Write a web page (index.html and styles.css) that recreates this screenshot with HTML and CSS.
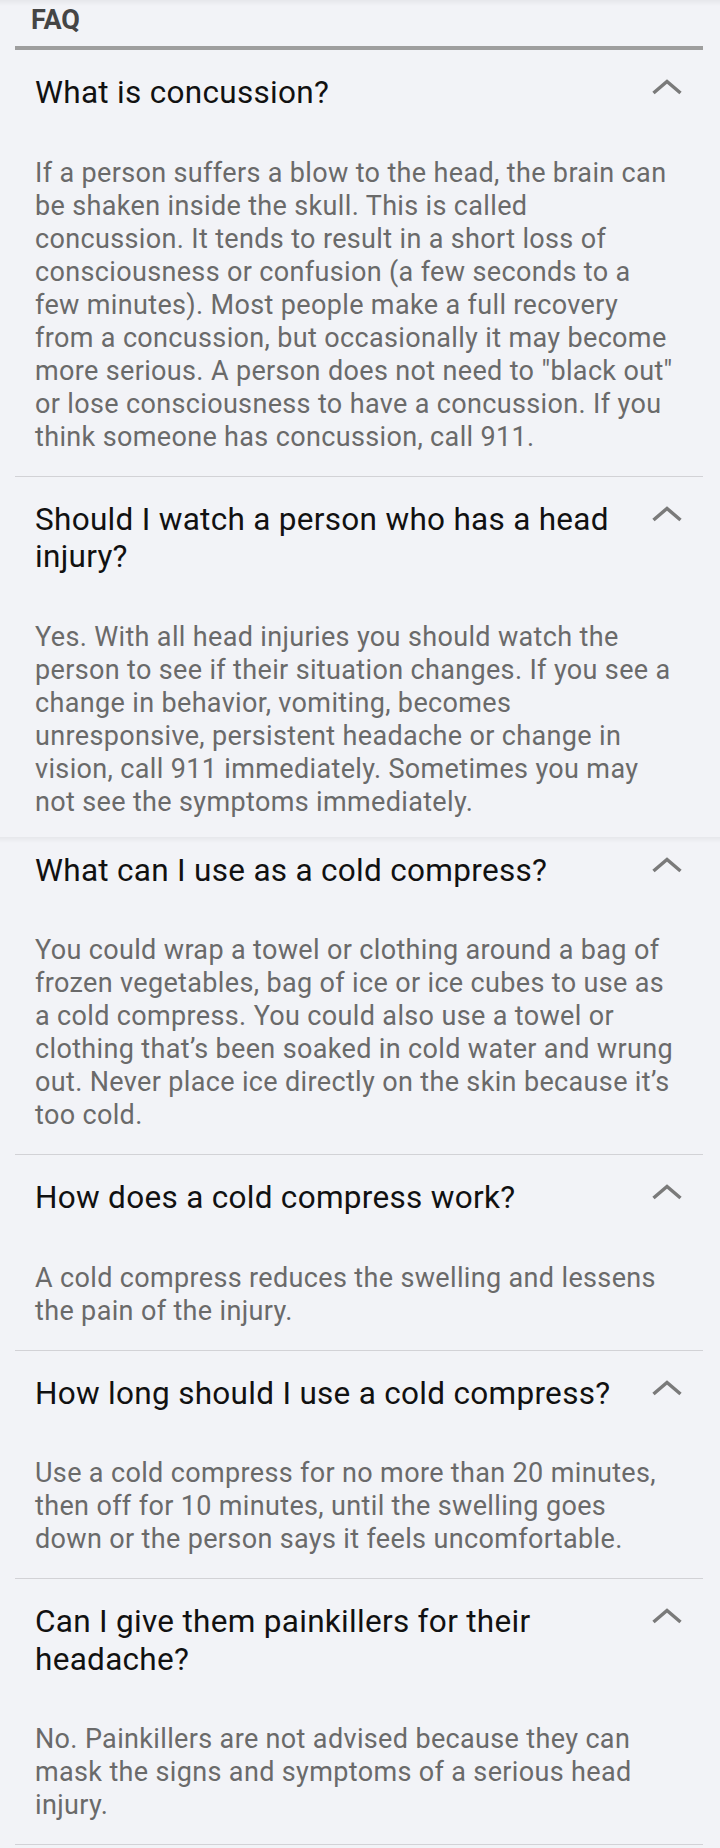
FILE: index.html
```html
<!DOCTYPE html>
<html lang="en">
<head>
<meta charset="utf-8">
<title>FAQ</title>
<link rel="stylesheet" href="styles.css">
</head>
<body>
<section class="group">
  <header class="faq-head"><h1 class="faq-title">FAQ</h1></header>
  <article class="item">
    <div class="q-row">
      <h2 class="q">What is concussion?</h2>
      <svg class="chev" viewBox="0 0 30 16" aria-hidden="true"><polyline points="1.5,14 15,2.5 28.5,14"/></svg>
    </div>
    <p class="a">If a person suffers a blow to the head, the brain can be shaken inside the skull. This is called concussion. It tends to result in a short loss of consciousness or confusion (a few seconds to a few minutes). Most people make a full recovery from a concussion, but occasionally it may become more serious. A person does not need to "black out" or lose consciousness to have a concussion. If you think someone has concussion, call 911.</p>
  </article>
  <article class="item">
    <div class="q-row">
      <h2 class="q">Should I watch a person who has a head injury?</h2>
      <svg class="chev" viewBox="0 0 30 16" aria-hidden="true"><polyline points="1.5,14 15,2.5 28.5,14"/></svg>
    </div>
    <p class="a">Yes. With all head injuries you should watch the person to see if their situation changes. If you see a change in behavior, vomiting, becomes unresponsive, persistent headache or change in vision, call 911 immediately. Sometimes you may not see the symptoms immediately.</p>
  </article>
</section>
<section class="group">
  <article class="item">
    <div class="q-row">
      <h2 class="q">What can I use as a cold compress?</h2>
      <svg class="chev" viewBox="0 0 30 16" aria-hidden="true"><polyline points="1.5,14 15,2.5 28.5,14"/></svg>
    </div>
    <p class="a">You could wrap a towel or clothing around a bag of frozen vegetables, bag of ice or ice cubes to use as a cold compress. You could also use a towel or clothing that’s been soaked in cold water and wrung out. Never place ice directly on the skin because it’s too cold.</p>
  </article>
  <article class="item">
    <div class="q-row">
      <h2 class="q">How does a cold compress work?</h2>
      <svg class="chev" viewBox="0 0 30 16" aria-hidden="true"><polyline points="1.5,14 15,2.5 28.5,14"/></svg>
    </div>
    <p class="a">A cold compress reduces the swelling and lessens the pain of the injury.</p>
  </article>
  <article class="item">
    <div class="q-row">
      <h2 class="q">How long should I use a cold compress?</h2>
      <svg class="chev" viewBox="0 0 30 16" aria-hidden="true"><polyline points="1.5,14 15,2.5 28.5,14"/></svg>
    </div>
    <p class="a">Use a cold compress for no more than 20 minutes, then off for 10 minutes, until the swelling goes down or the person says it feels uncomfortable.</p>
  </article>
  <article class="item">
    <div class="q-row">
      <h2 class="q">Can I give them painkillers for their headache?</h2>
      <svg class="chev" viewBox="0 0 30 16" aria-hidden="true"><polyline points="1.5,14 15,2.5 28.5,14"/></svg>
    </div>
    <p class="a">No. Painkillers are not advised because they can mask the signs and symptoms of a serious head injury.</p>
  </article>
</section>
</body>
</html>
```

FILE: styles.css
```css
html, body {
  margin: 0;
  padding: 0;
  width: 720px;
  overflow-x: hidden;
}

body {
  background: #f2f3f7;
  font-family: Roboto, "Noto Sans", sans-serif;
}

.group {
  background: linear-gradient(to bottom, #e6e7eb 0, #f2f3f7 6px);
  padding: 0 17px 0 15px;
}

.faq-head {
  padding: 4px 0 9px 16px;
  border-bottom: 4px solid #9e9e9e;
}

.faq-title {
  margin: 0;
  font-size: 27px;
  line-height: 33px;
  font-weight: 700;
  color: #454545;
}

.item {
  padding: 24px 0 22px 20px;
  border-bottom: 1px solid #d2d2d6;
}

.group:first-child .item:last-child {
  border-bottom: none;
  padding-bottom: 18px;
}

.group + .group .item:first-child {
  padding-top: 15px;
}

.q-row {
  display: flex;
  align-items: flex-start;
  gap: 16px;
  padding-right: 21px;
}

.q {
  flex: 1;
  margin: 0;
  font-size: 31.5px;
  line-height: 37.5px;
  font-weight: 400;
  letter-spacing: 0.3px;
  color: #111111;
}

.chev {
  flex: none;
  width: 30px;
  height: 16px;
  margin-top: 5px;
}

.chev polyline {
  fill: none;
  stroke: #7a7a7a;
  stroke-width: 3.5;
  stroke-linejoin: miter;
}

.a {
  margin: 45px 0 0;
  padding-right: 24px;
  font-size: 27px;
  line-height: 33px;
  letter-spacing: 0.35px;
  color: #6a6a6a;
}
```
